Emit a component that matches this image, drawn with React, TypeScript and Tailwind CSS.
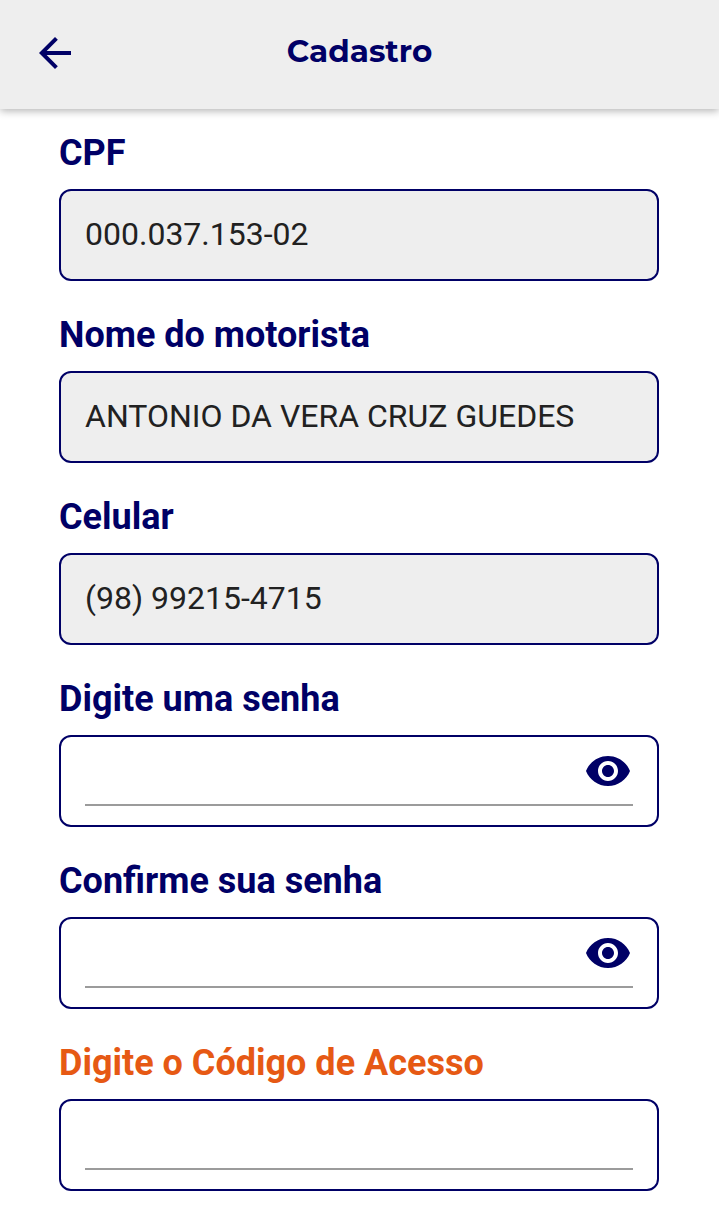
import { useState } from "react";
import { MdArrowBack, MdVisibility, MdVisibilityOff } from "react-icons/md";
import clsx from "clsx";

interface FieldProps {
  id: string;
  label: string;
  defaultValue?: string;
  readOnly?: boolean;
  password?: boolean;
  highlight?: boolean;
}

const Field = ({ id, label, defaultValue, readOnly, password, highlight }: FieldProps) => {
  const [visible, setVisible] = useState(false);

  return (
    <div>
      <label
        htmlFor={id}
        className={clsx(
          "block mb-[14px] text-[36px] leading-[44px] font-bold",
          highlight ? "text-[#e65914]" : "text-[#000066]"
        )}
      >
        {label}
      </label>
      <div
        className={clsx(
          "relative border-2 border-[#000066] rounded-xl px-6 pt-6 pb-[19px]",
          readOnly ? "bg-[#eeeeee]" : "bg-white"
        )}
      >
        <input
          id={id}
          type={password && !visible ? "password" : "text"}
          defaultValue={defaultValue}
          readOnly={readOnly}
          className={clsx(
            "block w-full h-[45px] pb-[5px] border-b-2 bg-transparent text-[32px] text-[#212121] outline-none",
            readOnly ? "border-transparent" : "border-[#9b9b9b]",
            password && "pr-14"
          )}
        />
        {password && (
          <button
            type="button"
            aria-label={visible ? "Ocultar senha" : "Mostrar senha"}
            onClick={() => setVisible((prev) => !prev)}
            className="absolute top-[10px] right-[25px] text-[#000066] cursor-pointer"
          >
            {visible ? (
              <MdVisibilityOff className="w-12 h-12" />
            ) : (
              <MdVisibility className="w-12 h-12" />
            )}
          </button>
        )}
      </div>
    </div>
  );
};

const App = () => {
  return (
    <div className="min-h-screen bg-white font-['Roboto',sans-serif]">
      <header className="grid grid-cols-[48px_1fr_48px] items-center h-[109px] px-[31px] pb-1 bg-[#eeeeee] shadow-[0_2px_8px_rgba(0,0,0,0.3)]">
        <button type="button" aria-label="Voltar" className="text-[#000066] cursor-pointer">
          <MdArrowBack className="w-12 h-12" />
        </button>
        <h1 className="pb-1 text-center text-[31px] leading-[40px] font-bold text-[#000066] font-['Montserrat','Inter',sans-serif]">
          Cadastro
        </h1>
      </header>
      <form
        className="flex flex-col gap-8 pt-[22px] pb-[38px] pl-[59px] pr-[60px]"
        onSubmit={(e) => e.preventDefault()}
      >
        <Field id="cpf" label="CPF" defaultValue="000.037.153-02" readOnly />
        <Field
          id="nome"
          label="Nome do motorista"
          defaultValue="ANTONIO DA VERA CRUZ GUEDES"
          readOnly
        />
        <Field id="celular" label="Celular" defaultValue="(98) 99215-4715" readOnly />
        <Field id="senha" label="Digite uma senha" password />
        <Field id="confirmacao" label="Confirme sua senha" password />
        <Field id="codigo" label="Digite o Código de Acesso" highlight />
      </form>
    </div>
  );
};

export default App;
